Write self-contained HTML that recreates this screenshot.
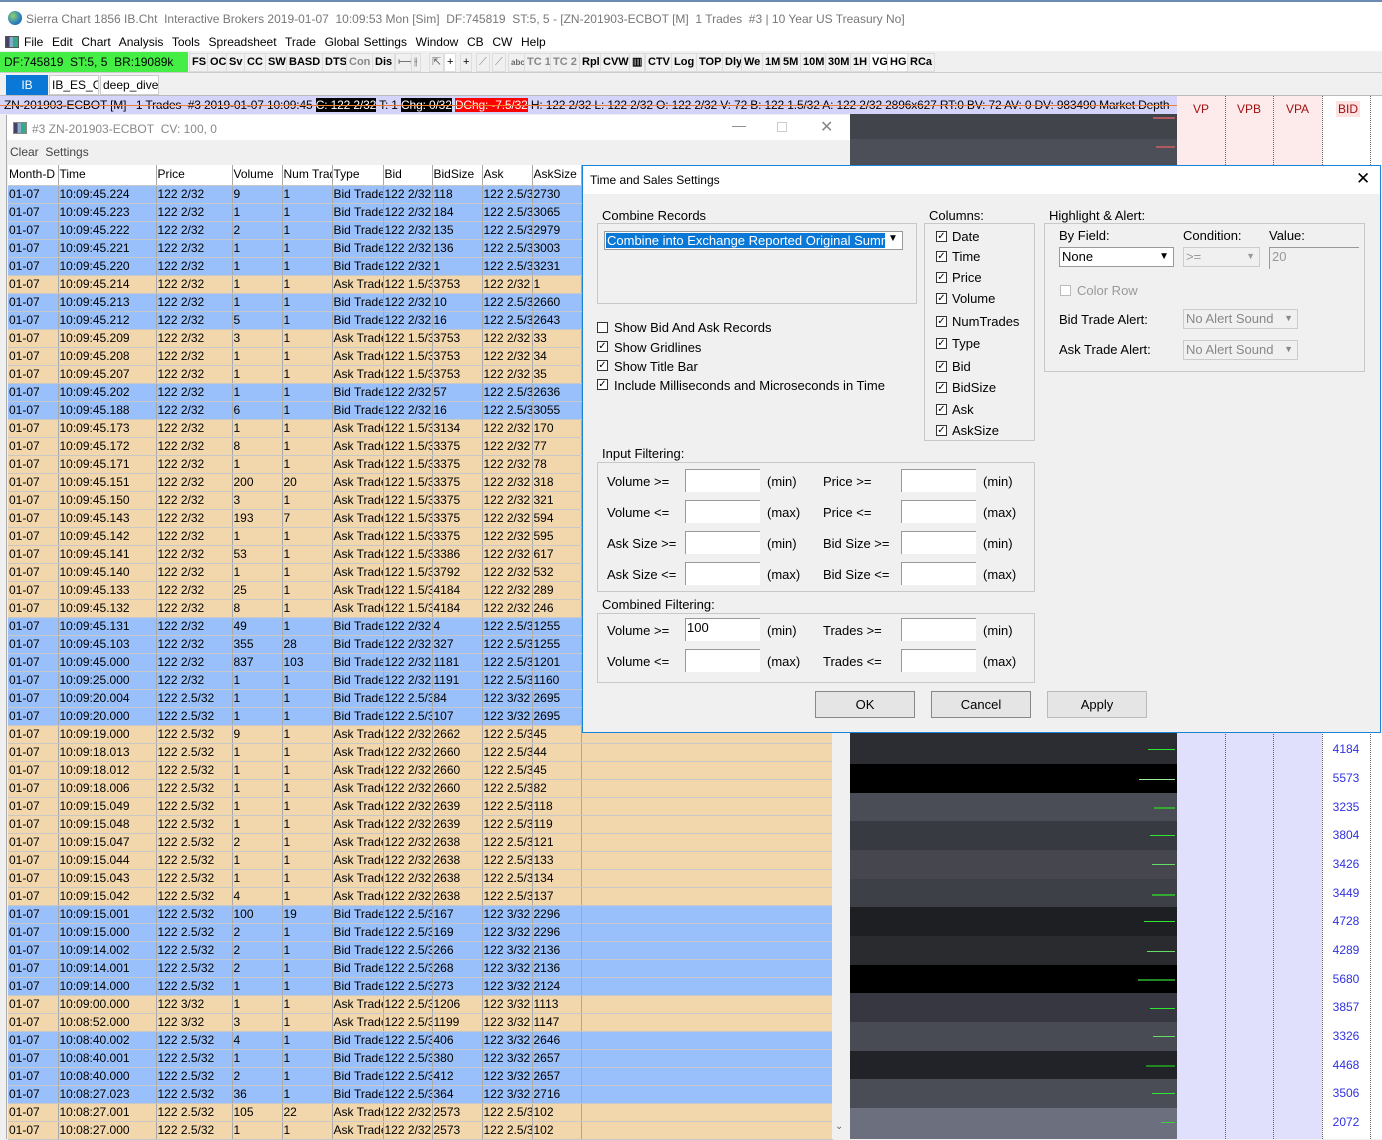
<!DOCTYPE html>
<html><head><meta charset="utf-8">
<style>
*{box-sizing:border-box;margin:0;padding:0}
body{width:1382px;height:1139px;overflow:hidden;position:relative;background:#f0f0f0;font-family:"Liberation Sans",sans-serif;font-size:12px;color:#000}
.a{position:absolute}
#title{left:0;top:0;width:1382px;height:35px;background:#fff;border-top:2px solid #6a8cb0;color:#777;font-size:12px}
#menu{left:0;top:34px;width:1382px;height:17px;background:#fff;font-size:12px}
#tool{left:0;top:51px;width:1382px;height:22px;background:#f0f0f0;border-bottom:1px solid #ccc}
.tb{position:absolute;top:2px;height:19px;border:1px solid #ddd;font-weight:bold;font-size:11px;line-height:17px;padding:0 2px;background:#f0f0f0}
#tabs{left:0;top:73px;width:1382px;height:23px;background:#f0f0f0;border-bottom:1px solid #bbb}
#info{left:0;top:96px;width:1177px;height:18px;background:#d4d4fa;font-size:12px;letter-spacing:-0.15px;line-height:18px;white-space:nowrap;overflow:hidden}
#win{left:6px;top:115px;width:844px;height:1024px;background:#f0f0f0;border-left:1px solid #aaa}
table{border-collapse:collapse;table-layout:fixed;position:absolute;left:8px;top:165px;width:824px}
td{height:18px;white-space:nowrap;overflow:hidden;padding-left:1px;border-right:1px solid #a8a8a8;border-bottom:1px solid #c8c8c8;font-size:12px;line-height:17px}
tr.h td{background:#fff;height:20px}
tr.b td{background:#99c0fa}
tr.s td{background:#f2d7ac}
#dlg{left:582px;top:165px;width:799px;height:568px;background:#f0f0f0;border:1px solid #1883d7;font-size:13px}
.gb{position:absolute;border:1px solid #c8c8c8}
.gt{position:absolute;background:#f0f0f0;padding:0 2px;font-size:13px}
.cb{position:absolute;width:11px;height:11px;border:1px solid #333;background:#fff;font-size:10px;line-height:9px;text-align:center}
.l{position:absolute;font-size:13px;white-space:nowrap}
.in{position:absolute;width:75px;height:23px;background:#fff;border-top:1px solid #999;border-left:1px solid #999}
.btn{position:absolute;width:100px;height:27px;border:1px solid #888;background:#e5e5e5;text-align:center;line-height:25px;font-size:13px}
.cr{position:absolute;left:850px;width:327px}
.gl{position:absolute;height:1px;background:#2ee62e}
.num{position:absolute;left:1322px;width:48px;text-align:center;color:#3030e0;font-size:12px}
</style></head><body>

<div id="title" class="a">
 <div class="a" style="left:8px;top:9px;width:14px;height:14px;border-radius:50%;background:radial-gradient(circle at 35% 35%,#8fd36a,#2a7fc0 60%,#1a4f90)"></div>
 <div class="a" style="left:26px;top:10px;white-space:nowrap">Sierra Chart 1856 IB.Cht&nbsp; Interactive Brokers 2019-01-07&nbsp; 10:09:53 Mon [Sim]&nbsp; DF:745819&nbsp; ST:5, 5 - [ZN-201903-ECBOT [M]&nbsp; 1 Trades&nbsp; #3 | 10 Year US Treasury No]</div>
</div>
<div id="menu" class="a">
 <div class="a" style="left:5px;top:2px;width:14px;height:12px;background:linear-gradient(90deg,#446 0 30%,#8ac 30% 60%,#3a8 60%);border:1px solid #555"></div>
 <div class="a" style="left:24px;top:1px;white-space:nowrap;word-spacing:1px">File&nbsp; Edit&nbsp; Chart&nbsp; Analysis&nbsp; Tools&nbsp; Spreadsheet&nbsp; Trade&nbsp; Global Settings&nbsp; Window&nbsp; CB&nbsp; CW&nbsp; Help</div>
</div>
<div id="tool" class="a">
 <div class="a" style="left:0;top:1px;width:188px;height:20px;background:#44ee44;font-size:12px;line-height:20px;padding-left:4px">DF:745819&nbsp; ST:5, 5&nbsp; BR:19089k</div>
 <div class="tb" style="left:189px">FS</div><div class="tb" style="left:207px">OC</div><div class="tb" style="left:226px">Sv</div><div class="tb" style="left:244px">CC</div>
 <div class="tb" style="left:265px">SW</div><div class="tb" style="left:286px">BASD</div><div class="tb" style="left:322px">DTS</div><div class="tb" style="left:346px;color:#888">Con</div><div class="tb" style="left:372px">Dis</div>
 <div class="tb" style="left:395px;font-weight:normal;color:#666">⟼</div><div class="tb" style="left:411px;font-weight:normal;color:#666">⫲</div><div class="tb" style="left:429px;font-weight:normal;color:#666">⇱</div>
 <div class="tb" style="left:444px;background:#fff;font-weight:normal">+</div><div class="tb" style="left:460px;font-weight:normal">+</div><div class="tb" style="left:476px;font-weight:normal;color:#888">⟋</div><div class="tb" style="left:492px;font-weight:normal;color:#888">⟋</div><div class="tb" style="left:508px;font-size:8px;color:#666">abc</div>
 <div class="tb" style="left:524px;color:#888">TC 1</div><div class="tb" style="left:550px;color:#888">TC 2</div><div class="tb" style="left:579px">Rpl</div><div class="tb" style="left:600px">CVW</div><div class="tb" style="left:629px">▥</div><div class="tb" style="left:645px">CTV</div><div class="tb" style="left:671px">Log</div><div class="tb" style="left:696px">TOP</div>
 <div class="tb" style="left:722px">Dly</div><div class="tb" style="left:741px">We</div><div class="tb" style="left:762px">1M</div><div class="tb" style="left:780px">5M</div><div class="tb" style="left:800px">10M</div><div class="tb" style="left:825px">30M</div><div class="tb" style="left:850px">1H</div><div class="tb" style="left:869px;background:#fff">VG</div><div class="tb" style="left:887px;background:#fff">HG</div><div class="tb" style="left:907px">RCa</div>
</div>
<div id="tabs" class="a">
 <div class="a" style="left:6px;top:2px;width:42px;height:20px;background:#0a78d7;color:#fff;text-align:center;line-height:20px">IB</div>
 <div class="a" style="left:49px;top:2px;width:50px;height:20px;background:#fff;border:1px solid #ccc;line-height:18px;padding-left:2px;overflow:hidden;white-space:nowrap">IB_ES_CL</div>
 <div class="a" style="left:100px;top:2px;width:59px;height:20px;background:#fff;border:1px solid #ccc;line-height:18px;padding-left:2px">deep_dive</div>
</div>
<div id="info" class="a"><div class="a" style="left:0;top:9px;width:1177px;height:1px;background:#f08030"></div><span style="padding-left:4px">ZN-201903-ECBOT [M]&nbsp;&nbsp; 1 Trades&nbsp; #3 2019-01-07 10:09:45 </span><span style="background:#000;color:#fff">C: 122 2/32</span><span> T: 1 </span><span style="background:#000;color:#fff">Chg: 0/32</span> <span style="background:#f00;color:#fff">DChg: -7.5/32</span><span> H: 122 2/32 L: 122 2/32 O: 122 2/32 V: 72 B: 122 1.5/32 A: 122 2/32 2896x627 RT:0 BV: 72 AV: 0 DV: 983490 Market Depth</span></div>

<!-- right columns -->
<div class="a" style="left:1177px;top:96px;width:145px;height:69px;background:#fdeaea"></div>
<div class="a" style="left:1322px;top:96px;width:60px;height:69px;background:#fff"></div>
<div class="a" style="left:1177px;top:733px;width:145px;height:406px;background:#e0e0fc"></div>
<div class="a" style="left:1322px;top:733px;width:60px;height:406px;background:#fff"></div>
<div class="a" style="left:1225px;top:96px;width:0;height:1043px;border-left:1px dotted #666"></div>
<div class="a" style="left:1273px;top:96px;width:0;height:1043px;border-left:1px dotted #666"></div>
<div class="a" style="left:1322px;top:96px;width:0;height:1043px;border-left:1px dotted #666"></div>
<div class="a" style="left:1370px;top:96px;width:0;height:1043px;border-left:1px dotted #666"></div>
<div class="a" style="left:1177px;top:102px;width:48px;text-align:center;color:#a01010">VP</div>
<div class="a" style="left:1225px;top:102px;width:48px;text-align:center;color:#a01010">VPB</div>
<div class="a" style="left:1273px;top:102px;width:49px;text-align:center;color:#a01010">VPA</div>
<div class="a" style="left:1336px;top:101px;padding:1px 2px;background:#fde0e0;color:#a01010">BID</div>

<!-- chart -->
<div class="cr" style="top:114px;height:25px;background:#42444c"></div>
<div class="cr" style="top:139px;height:26px;background:#4c4f58"></div>
<div class="a" style="left:1153px;top:117px;width:22px;height:2px;background:#b05a60"></div>
<div class="a" style="left:1156px;top:146px;width:19px;height:2px;background:#b05a60"></div>
<div class="cr" style="top:733px;height:31px;background:#2c2d32"></div>
<div class="cr" style="top:764px;height:29px;background:#000"></div>
<div class="cr" style="top:793px;height:28px;background:#4a4d55"></div>
<div class="cr" style="top:821px;height:29px;background:#383a42"></div>
<div class="cr" style="top:850px;height:29px;background:#45464e"></div>
<div class="cr" style="top:879px;height:28px;background:#3e4048"></div>
<div class="cr" style="top:907px;height:29px;background:#1e1f22"></div>
<div class="cr" style="top:936px;height:29px;background:#2a2b2f"></div>
<div class="cr" style="top:965px;height:28px;background:#000"></div>
<div class="cr" style="top:993px;height:29px;background:#373741"></div>
<div class="cr" style="top:1022px;height:29px;background:#484b54"></div>
<div class="cr" style="top:1051px;height:28px;background:#222328"></div>
<div class="cr" style="top:1079px;height:29px;background:#4a4d56"></div>
<div class="cr" style="top:1108px;height:31px;background:#6c6f7e"></div>
<div class="gl" style="left:1148px;top:749px;width:27px"></div>
<div class="gl" style="left:1139px;top:779px;width:36px;background:#9e9"></div>
<div class="gl" style="left:1154px;top:807px;width:21px;height:2px;background:#3a3"></div>
<div class="gl" style="left:1150px;top:835px;width:25px"></div>
<div class="gl" style="left:1152px;top:864px;width:23px;background:#6d6"></div>
<div class="gl" style="left:1152px;top:894px;width:23px;height:2px;background:#3a3"></div>
<div class="gl" style="left:1144px;top:921px;width:31px"></div>
<div class="gl" style="left:1147px;top:951px;width:28px;background:#6d6"></div>
<div class="gl" style="left:1138px;top:979px;width:37px;height:2px;background:#282"></div>
<div class="gl" style="left:1150px;top:1008px;width:25px"></div>
<div class="gl" style="left:1153px;top:1036px;width:22px;background:#6d6"></div>
<div class="gl" style="left:1146px;top:1065px;width:29px;height:2px;background:#282"></div>
<div class="gl" style="left:1152px;top:1093px;width:23px"></div>
<div class="gl" style="left:1161px;top:1122px;width:14px;background:#4c4"></div>
<div class="num" style="top:742px">4184</div><div class="num" style="top:771px">5573</div><div class="num" style="top:800px">3235</div><div class="num" style="top:828px">3804</div><div class="num" style="top:857px">3426</div><div class="num" style="top:886px">3449</div><div class="num" style="top:914px">4728</div><div class="num" style="top:943px">4289</div><div class="num" style="top:972px">5680</div><div class="num" style="top:1000px">3857</div><div class="num" style="top:1029px">3326</div><div class="num" style="top:1058px">4468</div><div class="num" style="top:1086px">3506</div><div class="num" style="top:1115px">2072</div>

<!-- T&S window -->
<div id="win" class="a">
 <div class="a" style="left:0;top:0;width:843px;height:25px;background:#fff"></div>
 <div class="a" style="left:6px;top:7px;width:14px;height:12px;background:linear-gradient(90deg,#446 0 30%,#8ac 30% 60%,#3a8 60%);border:1px solid #888"></div>
 <div class="a" style="left:25px;top:7px;color:#888">#3 ZN-201903-ECBOT&nbsp; CV: 100, 0</div>
 <div class="a" style="left:725px;top:2px;color:#888;font-size:14px">—</div>
 <div class="a" style="left:770px;top:7px;width:10px;height:10px;border:1px solid #ccc"></div>
 <div class="a" style="left:813px;top:2px;color:#888;font-size:16px">✕</div>
 <div class="a" style="left:3px;top:30px;color:#444">Clear&nbsp; Settings</div>
</div>
<table>
<colgroup><col style="width:50px"><col style="width:98px"><col style="width:76px"><col style="width:50px"><col style="width:50px"><col style="width:51px"><col style="width:49px"><col style="width:50px"><col style="width:50px"><col style="width:49px"><col style="width:251px"></colgroup>
<tr class="h"><td>Month-D</td><td>Time</td><td>Price</td><td>Volume</td><td>Num Trades</td><td>Type</td><td>Bid</td><td>BidSize</td><td>Ask</td><td>AskSize</td><td></td></tr>
<tr class="b"><td>01-07</td><td>10:09:45.224</td><td>122 2/32</td><td>9</td><td>1</td><td>Bid Trade</td><td>122 2/32</td><td>118</td><td>122 2.5/3</td><td>2730</td><td></td></tr>
<tr class="b"><td>01-07</td><td>10:09:45.223</td><td>122 2/32</td><td>1</td><td>1</td><td>Bid Trade</td><td>122 2/32</td><td>184</td><td>122 2.5/3</td><td>3065</td><td></td></tr>
<tr class="b"><td>01-07</td><td>10:09:45.222</td><td>122 2/32</td><td>2</td><td>1</td><td>Bid Trade</td><td>122 2/32</td><td>135</td><td>122 2.5/3</td><td>2979</td><td></td></tr>
<tr class="b"><td>01-07</td><td>10:09:45.221</td><td>122 2/32</td><td>1</td><td>1</td><td>Bid Trade</td><td>122 2/32</td><td>136</td><td>122 2.5/3</td><td>3003</td><td></td></tr>
<tr class="b"><td>01-07</td><td>10:09:45.220</td><td>122 2/32</td><td>1</td><td>1</td><td>Bid Trade</td><td>122 2/32</td><td>1</td><td>122 2.5/3</td><td>3231</td><td></td></tr>
<tr class="s"><td>01-07</td><td>10:09:45.214</td><td>122 2/32</td><td>1</td><td>1</td><td>Ask Trade</td><td>122 1.5/3</td><td>3753</td><td>122 2/32</td><td>1</td><td></td></tr>
<tr class="b"><td>01-07</td><td>10:09:45.213</td><td>122 2/32</td><td>1</td><td>1</td><td>Bid Trade</td><td>122 2/32</td><td>10</td><td>122 2.5/3</td><td>2660</td><td></td></tr>
<tr class="b"><td>01-07</td><td>10:09:45.212</td><td>122 2/32</td><td>5</td><td>1</td><td>Bid Trade</td><td>122 2/32</td><td>16</td><td>122 2.5/3</td><td>2643</td><td></td></tr>
<tr class="s"><td>01-07</td><td>10:09:45.209</td><td>122 2/32</td><td>3</td><td>1</td><td>Ask Trade</td><td>122 1.5/3</td><td>3753</td><td>122 2/32</td><td>33</td><td></td></tr>
<tr class="s"><td>01-07</td><td>10:09:45.208</td><td>122 2/32</td><td>1</td><td>1</td><td>Ask Trade</td><td>122 1.5/3</td><td>3753</td><td>122 2/32</td><td>34</td><td></td></tr>
<tr class="s"><td>01-07</td><td>10:09:45.207</td><td>122 2/32</td><td>1</td><td>1</td><td>Ask Trade</td><td>122 1.5/3</td><td>3753</td><td>122 2/32</td><td>35</td><td></td></tr>
<tr class="b"><td>01-07</td><td>10:09:45.202</td><td>122 2/32</td><td>1</td><td>1</td><td>Bid Trade</td><td>122 2/32</td><td>57</td><td>122 2.5/3</td><td>2636</td><td></td></tr>
<tr class="b"><td>01-07</td><td>10:09:45.188</td><td>122 2/32</td><td>6</td><td>1</td><td>Bid Trade</td><td>122 2/32</td><td>16</td><td>122 2.5/3</td><td>3055</td><td></td></tr>
<tr class="s"><td>01-07</td><td>10:09:45.173</td><td>122 2/32</td><td>1</td><td>1</td><td>Ask Trade</td><td>122 1.5/3</td><td>3134</td><td>122 2/32</td><td>170</td><td></td></tr>
<tr class="s"><td>01-07</td><td>10:09:45.172</td><td>122 2/32</td><td>8</td><td>1</td><td>Ask Trade</td><td>122 1.5/3</td><td>3375</td><td>122 2/32</td><td>77</td><td></td></tr>
<tr class="s"><td>01-07</td><td>10:09:45.171</td><td>122 2/32</td><td>1</td><td>1</td><td>Ask Trade</td><td>122 1.5/3</td><td>3375</td><td>122 2/32</td><td>78</td><td></td></tr>
<tr class="s"><td>01-07</td><td>10:09:45.151</td><td>122 2/32</td><td>200</td><td>20</td><td>Ask Trade</td><td>122 1.5/3</td><td>3375</td><td>122 2/32</td><td>318</td><td></td></tr>
<tr class="s"><td>01-07</td><td>10:09:45.150</td><td>122 2/32</td><td>3</td><td>1</td><td>Ask Trade</td><td>122 1.5/3</td><td>3375</td><td>122 2/32</td><td>321</td><td></td></tr>
<tr class="s"><td>01-07</td><td>10:09:45.143</td><td>122 2/32</td><td>193</td><td>7</td><td>Ask Trade</td><td>122 1.5/3</td><td>3375</td><td>122 2/32</td><td>594</td><td></td></tr>
<tr class="s"><td>01-07</td><td>10:09:45.142</td><td>122 2/32</td><td>1</td><td>1</td><td>Ask Trade</td><td>122 1.5/3</td><td>3375</td><td>122 2/32</td><td>595</td><td></td></tr>
<tr class="s"><td>01-07</td><td>10:09:45.141</td><td>122 2/32</td><td>53</td><td>1</td><td>Ask Trade</td><td>122 1.5/3</td><td>3386</td><td>122 2/32</td><td>617</td><td></td></tr>
<tr class="s"><td>01-07</td><td>10:09:45.140</td><td>122 2/32</td><td>1</td><td>1</td><td>Ask Trade</td><td>122 1.5/3</td><td>3792</td><td>122 2/32</td><td>532</td><td></td></tr>
<tr class="s"><td>01-07</td><td>10:09:45.133</td><td>122 2/32</td><td>25</td><td>1</td><td>Ask Trade</td><td>122 1.5/3</td><td>4184</td><td>122 2/32</td><td>289</td><td></td></tr>
<tr class="s"><td>01-07</td><td>10:09:45.132</td><td>122 2/32</td><td>8</td><td>1</td><td>Ask Trade</td><td>122 1.5/3</td><td>4184</td><td>122 2/32</td><td>246</td><td></td></tr>
<tr class="b"><td>01-07</td><td>10:09:45.131</td><td>122 2/32</td><td>49</td><td>1</td><td>Bid Trade</td><td>122 2/32</td><td>4</td><td>122 2.5/3</td><td>1255</td><td></td></tr>
<tr class="b"><td>01-07</td><td>10:09:45.103</td><td>122 2/32</td><td>355</td><td>28</td><td>Bid Trade</td><td>122 2/32</td><td>327</td><td>122 2.5/3</td><td>1255</td><td></td></tr>
<tr class="b"><td>01-07</td><td>10:09:45.000</td><td>122 2/32</td><td>837</td><td>103</td><td>Bid Trade</td><td>122 2/32</td><td>1181</td><td>122 2.5/3</td><td>1201</td><td></td></tr>
<tr class="b"><td>01-07</td><td>10:09:25.000</td><td>122 2/32</td><td>1</td><td>1</td><td>Bid Trade</td><td>122 2/32</td><td>1191</td><td>122 2.5/3</td><td>1160</td><td></td></tr>
<tr class="b"><td>01-07</td><td>10:09:20.004</td><td>122 2.5/32</td><td>1</td><td>1</td><td>Bid Trade</td><td>122 2.5/3</td><td>84</td><td>122 3/32</td><td>2695</td><td></td></tr>
<tr class="b"><td>01-07</td><td>10:09:20.000</td><td>122 2.5/32</td><td>1</td><td>1</td><td>Bid Trade</td><td>122 2.5/3</td><td>107</td><td>122 3/32</td><td>2695</td><td></td></tr>
<tr class="s"><td>01-07</td><td>10:09:19.000</td><td>122 2.5/32</td><td>9</td><td>1</td><td>Ask Trade</td><td>122 2/32</td><td>2662</td><td>122 2.5/3</td><td>45</td><td></td></tr>
<tr class="s"><td>01-07</td><td>10:09:18.013</td><td>122 2.5/32</td><td>1</td><td>1</td><td>Ask Trade</td><td>122 2/32</td><td>2660</td><td>122 2.5/3</td><td>44</td><td></td></tr>
<tr class="s"><td>01-07</td><td>10:09:18.012</td><td>122 2.5/32</td><td>1</td><td>1</td><td>Ask Trade</td><td>122 2/32</td><td>2660</td><td>122 2.5/3</td><td>45</td><td></td></tr>
<tr class="s"><td>01-07</td><td>10:09:18.006</td><td>122 2.5/32</td><td>1</td><td>1</td><td>Ask Trade</td><td>122 2/32</td><td>2660</td><td>122 2.5/3</td><td>82</td><td></td></tr>
<tr class="s"><td>01-07</td><td>10:09:15.049</td><td>122 2.5/32</td><td>1</td><td>1</td><td>Ask Trade</td><td>122 2/32</td><td>2639</td><td>122 2.5/3</td><td>118</td><td></td></tr>
<tr class="s"><td>01-07</td><td>10:09:15.048</td><td>122 2.5/32</td><td>1</td><td>1</td><td>Ask Trade</td><td>122 2/32</td><td>2639</td><td>122 2.5/3</td><td>119</td><td></td></tr>
<tr class="s"><td>01-07</td><td>10:09:15.047</td><td>122 2.5/32</td><td>2</td><td>1</td><td>Ask Trade</td><td>122 2/32</td><td>2638</td><td>122 2.5/3</td><td>121</td><td></td></tr>
<tr class="s"><td>01-07</td><td>10:09:15.044</td><td>122 2.5/32</td><td>1</td><td>1</td><td>Ask Trade</td><td>122 2/32</td><td>2638</td><td>122 2.5/3</td><td>133</td><td></td></tr>
<tr class="s"><td>01-07</td><td>10:09:15.043</td><td>122 2.5/32</td><td>1</td><td>1</td><td>Ask Trade</td><td>122 2/32</td><td>2638</td><td>122 2.5/3</td><td>134</td><td></td></tr>
<tr class="s"><td>01-07</td><td>10:09:15.042</td><td>122 2.5/32</td><td>4</td><td>1</td><td>Ask Trade</td><td>122 2/32</td><td>2638</td><td>122 2.5/3</td><td>137</td><td></td></tr>
<tr class="b"><td>01-07</td><td>10:09:15.001</td><td>122 2.5/32</td><td>100</td><td>19</td><td>Bid Trade</td><td>122 2.5/3</td><td>167</td><td>122 3/32</td><td>2296</td><td></td></tr>
<tr class="b"><td>01-07</td><td>10:09:15.000</td><td>122 2.5/32</td><td>2</td><td>1</td><td>Bid Trade</td><td>122 2.5/3</td><td>169</td><td>122 3/32</td><td>2296</td><td></td></tr>
<tr class="b"><td>01-07</td><td>10:09:14.002</td><td>122 2.5/32</td><td>2</td><td>1</td><td>Bid Trade</td><td>122 2.5/3</td><td>266</td><td>122 3/32</td><td>2136</td><td></td></tr>
<tr class="b"><td>01-07</td><td>10:09:14.001</td><td>122 2.5/32</td><td>2</td><td>1</td><td>Bid Trade</td><td>122 2.5/3</td><td>268</td><td>122 3/32</td><td>2136</td><td></td></tr>
<tr class="b"><td>01-07</td><td>10:09:14.000</td><td>122 2.5/32</td><td>1</td><td>1</td><td>Bid Trade</td><td>122 2.5/3</td><td>273</td><td>122 3/32</td><td>2124</td><td></td></tr>
<tr class="s"><td>01-07</td><td>10:09:00.000</td><td>122 3/32</td><td>1</td><td>1</td><td>Ask Trade</td><td>122 2.5/3</td><td>1206</td><td>122 3/32</td><td>1113</td><td></td></tr>
<tr class="s"><td>01-07</td><td>10:08:52.000</td><td>122 3/32</td><td>3</td><td>1</td><td>Ask Trade</td><td>122 2.5/3</td><td>1199</td><td>122 3/32</td><td>1147</td><td></td></tr>
<tr class="b"><td>01-07</td><td>10:08:40.002</td><td>122 2.5/32</td><td>4</td><td>1</td><td>Bid Trade</td><td>122 2.5/3</td><td>406</td><td>122 3/32</td><td>2646</td><td></td></tr>
<tr class="b"><td>01-07</td><td>10:08:40.001</td><td>122 2.5/32</td><td>1</td><td>1</td><td>Bid Trade</td><td>122 2.5/3</td><td>380</td><td>122 3/32</td><td>2657</td><td></td></tr>
<tr class="b"><td>01-07</td><td>10:08:40.000</td><td>122 2.5/32</td><td>2</td><td>1</td><td>Bid Trade</td><td>122 2.5/3</td><td>412</td><td>122 3/32</td><td>2657</td><td></td></tr>
<tr class="b"><td>01-07</td><td>10:08:27.023</td><td>122 2.5/32</td><td>36</td><td>1</td><td>Bid Trade</td><td>122 2.5/3</td><td>364</td><td>122 3/32</td><td>2716</td><td></td></tr>
<tr class="s"><td>01-07</td><td>10:08:27.001</td><td>122 2.5/32</td><td>105</td><td>22</td><td>Ask Trade</td><td>122 2/32</td><td>2573</td><td>122 2.5/3</td><td>102</td><td></td></tr>
<tr class="s"><td>01-07</td><td>10:08:27.000</td><td>122 2.5/32</td><td>1</td><td>1</td><td>Ask Trade</td><td>122 2/32</td><td>2573</td><td>122 2.5/3</td><td>102</td><td></td></tr>
</table>
<div class="a" style="left:832px;top:165px;width:18px;height:974px;background:#f0f0f0"></div>
<div class="a" style="left:835px;top:1121px;color:#666;font-size:10px">⌄</div>

<!-- dialog -->
<div id="dlg" class="a">
 <div class="a" style="left:0;top:0;width:797px;height:28px;background:#fff"></div>
 <div class="l" style="left:7px;top:7px;font-size:12px">Time and Sales Settings</div>
 <div class="l" style="left:773px;top:3px;font-size:17px">✕</div>

 <div class="gb" style="left:14px;top:57px;width:320px;height:81px"></div>
 <div class="gt" style="left:17px;top:42px">Combine Records</div>
 <div class="a" style="left:21px;top:65px;width:299px;height:19px;background:#fff;border:1px solid #999"></div>
 <div class="a" style="left:23px;top:67px;width:279px;height:15px;background:#0a78d7;color:#fff;line-height:15px;white-space:nowrap;overflow:hidden;padding-left:1px">Combine into Exchange Reported Original Summary</div>
 <div class="l" style="left:305px;top:67px;font-size:10px">▼</div>

 <div class="cb" style="left:14px;top:156px"></div><div class="l" style="left:31px;top:154px">Show Bid And Ask Records</div>
 <div class="cb" style="left:14px;top:175px">✓</div><div class="l" style="left:31px;top:174px">Show Gridlines</div>
 <div class="cb" style="left:14px;top:194px">✓</div><div class="l" style="left:31px;top:193px">Show Title Bar</div>
 <div class="cb" style="left:14px;top:213px">✓</div><div class="l" style="left:31px;top:212px">Include Milliseconds and Microseconds in Time</div>

 <div class="gb" style="left:341px;top:57px;width:111px;height:218px"></div>
 <div class="gt" style="left:344px;top:42px">Columns:</div>
 <div class="cb" style="left:353px;top:65px">✓</div><div class="l" style="left:369px;top:63px">Date</div>
 <div class="cb" style="left:353px;top:85px">✓</div><div class="l" style="left:369px;top:83px">Time</div>
 <div class="cb" style="left:353px;top:106px">✓</div><div class="l" style="left:369px;top:104px">Price</div>
 <div class="cb" style="left:353px;top:127px">✓</div><div class="l" style="left:369px;top:125px">Volume</div>
 <div class="cb" style="left:353px;top:150px">✓</div><div class="l" style="left:369px;top:148px">NumTrades</div>
 <div class="cb" style="left:353px;top:172px">✓</div><div class="l" style="left:369px;top:170px">Type</div>
 <div class="cb" style="left:353px;top:195px">✓</div><div class="l" style="left:369px;top:193px">Bid</div>
 <div class="cb" style="left:353px;top:216px">✓</div><div class="l" style="left:369px;top:214px">BidSize</div>
 <div class="cb" style="left:353px;top:238px">✓</div><div class="l" style="left:369px;top:236px">Ask</div>
 <div class="cb" style="left:353px;top:259px">✓</div><div class="l" style="left:369px;top:257px">AskSize</div>

 <div class="gb" style="left:461px;top:57px;width:321px;height:149px"></div>
 <div class="gt" style="left:464px;top:42px">Highlight &amp; Alert:</div>
 <div class="l" style="left:476px;top:62px">By Field:</div>
 <div class="l" style="left:600px;top:62px">Condition:</div>
 <div class="l" style="left:686px;top:62px">Value:</div>
 <div class="a" style="left:476px;top:81px;width:115px;height:20px;background:#fff;border:1px solid #999;padding:1px 2px">None<span style="position:absolute;right:4px;top:3px;font-size:10px">▼</span></div>
 <div class="a" style="left:600px;top:81px;width:77px;height:20px;border:1px solid #ccc;color:#999;padding:1px 2px">&gt;=<span style="position:absolute;right:4px;top:3px;font-size:9px">▼</span></div>
 <div class="a" style="left:686px;top:81px;width:90px;height:22px;border-top:1px solid #999;border-left:1px solid #999;color:#999;padding:1px 2px">20</div>
 <div class="cb" style="left:477px;top:119px;border-color:#bbb"></div><div class="l" style="left:494px;top:117px;color:#999">Color Row</div>
 <div class="l" style="left:476px;top:146px">Bid Trade Alert:</div>
 <div class="a" style="left:600px;top:143px;width:115px;height:20px;border:1px solid #ccc;color:#888;padding:1px 2px">No Alert Sound<span style="position:absolute;right:4px;top:3px;font-size:9px">▼</span></div>
 <div class="l" style="left:476px;top:176px">Ask Trade Alert:</div>
 <div class="a" style="left:600px;top:174px;width:115px;height:20px;border:1px solid #ccc;color:#888;padding:1px 2px">No Alert Sound<span style="position:absolute;right:4px;top:3px;font-size:9px">▼</span></div>

 <div class="gb" style="left:14px;top:296px;width:438px;height:130px"></div>
 <div class="gt" style="left:17px;top:280px">Input Filtering:</div>
 <div class="l" style="left:24px;top:308px">Volume &gt;=</div><div class="in" style="left:102px;top:303px"></div><div class="l" style="left:184px;top:308px">(min)</div>
 <div class="l" style="left:240px;top:308px">Price &gt;=</div><div class="in" style="left:318px;top:303px"></div><div class="l" style="left:400px;top:308px">(min)</div>
 <div class="l" style="left:24px;top:339px">Volume &lt;=</div><div class="in" style="left:102px;top:334px"></div><div class="l" style="left:184px;top:339px">(max)</div>
 <div class="l" style="left:240px;top:339px">Price &lt;=</div><div class="in" style="left:318px;top:334px"></div><div class="l" style="left:400px;top:339px">(max)</div>
 <div class="l" style="left:24px;top:370px">Ask Size &gt;=</div><div class="in" style="left:102px;top:365px"></div><div class="l" style="left:184px;top:370px">(min)</div>
 <div class="l" style="left:240px;top:370px">Bid Size &gt;=</div><div class="in" style="left:318px;top:365px"></div><div class="l" style="left:400px;top:370px">(min)</div>
 <div class="l" style="left:24px;top:401px">Ask Size &lt;=</div><div class="in" style="left:102px;top:396px"></div><div class="l" style="left:184px;top:401px">(max)</div>
 <div class="l" style="left:240px;top:401px">Bid Size &lt;=</div><div class="in" style="left:318px;top:396px"></div><div class="l" style="left:400px;top:401px">(max)</div>

 <div class="gb" style="left:14px;top:447px;width:438px;height:70px"></div>
 <div class="gt" style="left:17px;top:431px">Combined Filtering:</div>
 <div class="l" style="left:24px;top:457px">Volume &gt;=</div><div class="in" style="left:102px;top:452px;padding:1px 1px">100</div><div class="l" style="left:184px;top:457px">(min)</div>
 <div class="l" style="left:240px;top:457px">Trades &gt;=</div><div class="in" style="left:318px;top:452px"></div><div class="l" style="left:400px;top:457px">(min)</div>
 <div class="l" style="left:24px;top:488px">Volume &lt;=</div><div class="in" style="left:102px;top:483px"></div><div class="l" style="left:184px;top:488px">(max)</div>
 <div class="l" style="left:240px;top:488px">Trades &lt;=</div><div class="in" style="left:318px;top:483px"></div><div class="l" style="left:400px;top:488px">(max)</div>

 <div class="btn" style="left:232px;top:525px">OK</div>
 <div class="btn" style="left:348px;top:525px">Cancel</div>
 <div class="btn" style="left:464px;top:525px;border-color:#bbb">Apply</div>
</div>
</body></html>
